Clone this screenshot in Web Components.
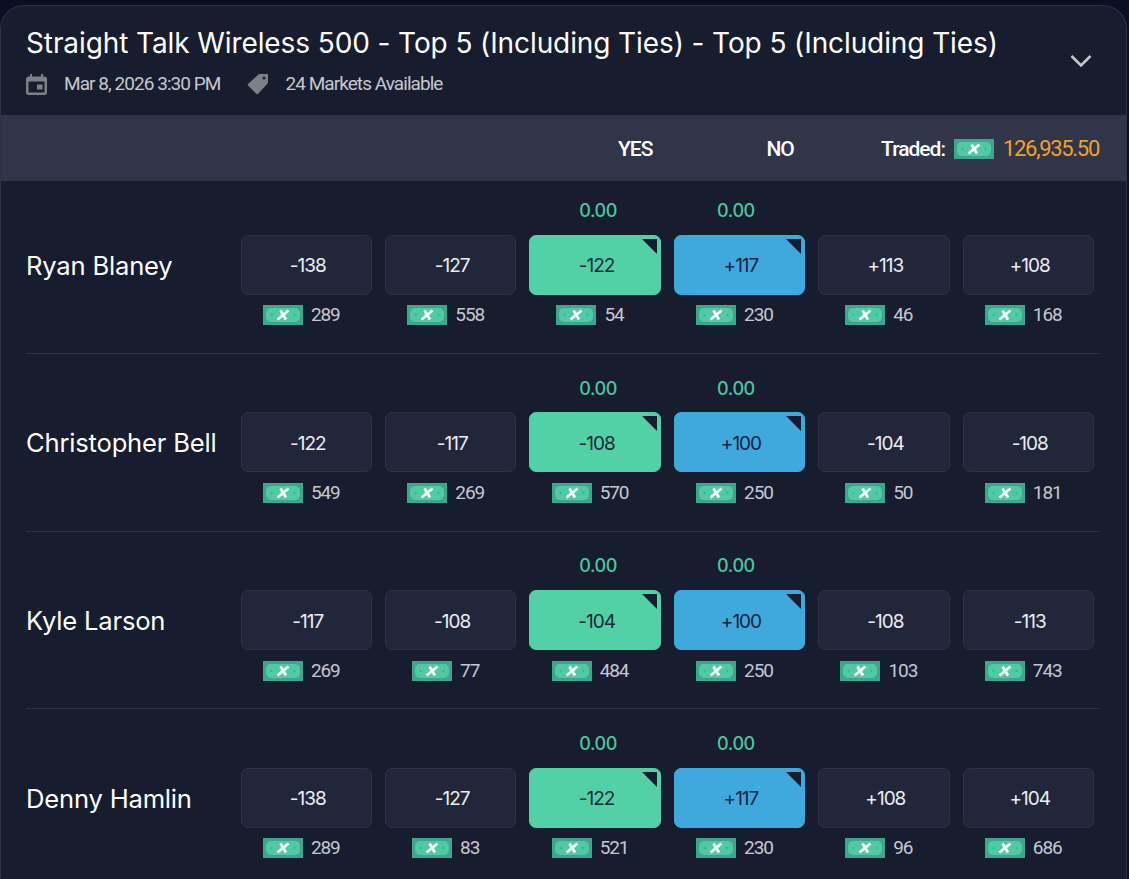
<!DOCTYPE html>
<html lang="en">
<head>
<meta charset="utf-8">
<title>Market</title>
<style>
  html, body { margin: 0; height: 879px; overflow: hidden; background: #0b0f24; }
  body { padding: 5px 2px 0 0; box-sizing: border-box; font-family: Inter, "Noto Sans", sans-serif; color: #fff; }
</style>
</head>
<body>
<market-card
  heading="Straight Talk Wireless 500 - Top 5 (Including Ties) - Top 5 (Including Ties)"
  date="Mar 8, 2026 3:30 PM"
  markets="24 Markets Available"
  traded="126,935.50">
  <runner-row name="Ryan Blaney" first data-prices="-138:289,-127:558,-122:54,+117:230,+113:46,+108:168"></runner-row>
  <runner-row name="Christopher Bell" data-prices="-122:549,-117:269,-108:570,+100:250,-104:50,-108:181"></runner-row>
  <runner-row name="Kyle Larson" data-prices="-117:269,-108:77,-104:484,+100:250,-108:103,-113:743"></runner-row>
  <runner-row name="Denny Hamlin" data-prices="-138:289,-127:83,-122:521,+117:230,+108:96,+104:686"></runner-row>
</market-card>

<script>
const billTemplate = document.createElement('template')
billTemplate.innerHTML = `
  <style>
    :host { display: inline-flex; width: 40px; height: 20px; flex: none; }
    svg { display: block; }
  </style>
  <svg width="40" height="20" viewBox="0 0 40 20" aria-hidden="true">
    <rect width="40" height="20" fill="#3da78e"/>
    <rect x="3" y="3" width="34" height="14" rx="5" fill="#4fcaa4"/>
    <circle cx="8.500" cy="10" r="1" fill="#3da78e"/>
    <circle cx="31.500" cy="10" r="1" fill="#3da78e"/>
    <path d="M14.500 14.500L25.500 5.500M17.500 5.500L23 14.500" stroke="#fff" stroke-width="2.800" fill="none"/>
  </svg>
`
customElements.define('bill-icon',
  class extends HTMLElement {
    constructor () {
      super()
      this.attachShadow({ mode: 'open' })
        .appendChild(billTemplate.content.cloneNode(true))
    }
  })

const cardTemplate = document.createElement('template')
cardTemplate.innerHTML = `
  <style>
    :host {
      display: block;
      background: #181c2f;
      border: 1px solid #2d3247;
      border-bottom: none;
      border-radius: 24px 24px 0 0;
      height: 900px;
      overflow: hidden;
    }
    #head {
      height: 109px;
      box-sizing: border-box;
      padding: 18px 26px 0 25px;
      position: relative;
    }
    h1 {
      margin: 0;
      font: 400 28px/38px "Inter", sans-serif;
      letter-spacing: -0.1px;
      color: #fff;
      white-space: nowrap;
    }
    #meta {
      display: flex;
      align-items: center;
      margin-top: 10px;
      font: 400 19px/24px "Roboto", sans-serif;
      letter-spacing: -0.95px;
      color: #c6c8cf;
    }
    #meta svg { display: block; flex: none; }
    #cal { margin-right: 17px; }
    #tag { margin: 0 17px 0 26px; }
    #chev { position: absolute; right: 33px; top: 47px; }
    #bar {
      height: 66px;
      box-sizing: border-box;
      display: flex;
      align-items: center;
      padding: 1px 27px 0 617px;
      background: #30354a;
      font: 500 21px/24px "Roboto", sans-serif;
      letter-spacing: -1px;
    }
    #no { margin-left: 114px; }
    #traded { margin-left: auto; display: flex; align-items: center; gap: 9px; }
    #amt { color: #eea326; font-weight: 400; font-size: 22px; letter-spacing: -1.300px; }
  </style>
  <div id="head">
    <h1></h1>
    <div id="meta">
      <svg id="cal" width="21" height="21" viewBox="0 0 21 21" fill="#7c8087">
        <path fill-rule="evenodd" d="M18 2.500H17V0H15V2.500H6V0H4V2.500H3C1.400 2.500 0 3.900 0 5V18.500C0 20 1 21 2.500 21H18.500C20 21 21 20 21 18.500V5C21 3.600 20 2.500 18 2.500ZM18.500 18.500H2.500V7.500H18.500ZM11 10.500H16.500V15.500H11Z"/>
      </svg>
      <span id="date"></span>
      <svg id="tag" width="22" height="22" viewBox="0 0 22 22" fill="#7c8087">
        <path d="M12 1H20C20.600 1 21 1.400 21 2V10L11 21C10.600 21.400 10 21.400 9.600 21L1 12.400C0.600 12 0.600 11.400 1 11ZM17 3.500A1.500 1.500 0 1 0 17 6.500A1.500 1.500 0 1 0 17 3.500Z" fill-rule="evenodd"/>
      </svg>
      <span id="markets"></span>
    </div>
    <svg id="chev" width="24" height="16" viewBox="0 0 24 16" fill="none" stroke="#c6c8cf" stroke-width="2.500">
      <path d="M2.500 3L12 12.500L21.500 3"/>
    </svg>
  </div>
  <div id="bar">
    <span>YES</span>
    <span id="no">NO</span>
    <div id="traded"><span>Traded:</span><bill-icon></bill-icon><span id="amt"></span></div>
  </div>
  <slot></slot>
`
customElements.define('market-card',
  class extends HTMLElement {
    constructor () {
      super()
      this.attachShadow({ mode: 'open' })
        .appendChild(cardTemplate.content.cloneNode(true))
    }

    connectedCallback () {
      const root = this.shadowRoot
      root.querySelector('h1').textContent = this.getAttribute('heading')
      root.querySelector('#date').textContent = this.getAttribute('date')
      root.querySelector('#markets').textContent = this.getAttribute('markets')
      root.querySelector('#amt').textContent = this.getAttribute('traded')
    }
  })

const priceTemplate = document.createElement('template')
priceTemplate.innerHTML = `
  <style>
    :host { display: flex; flex-direction: column; align-items: stretch; min-width: 0; }
    #stake {
      height: 24px;
      margin: -35.700px 0 11.700px;
      text-align: center;
      font: 500 18px/24px "Inter", sans-serif;
      letter-spacing: -0.4px;
      color: #4cc6a0;
    }
    :host([kind="yes"]) #stake { padding-left: 6px; }
    :host([kind="no"]) #stake { padding-right: 7px; }
    #btn {
      height: 60px;
      box-sizing: border-box;
      display: flex;
      align-items: center;
      justify-content: center;
      position: relative;
      border-radius: 7px;
      border: 1px solid #2d3247;
      background: #22263a;
      color: #eceef2;
      font: 400 19px/24px "Inter", sans-serif;
      letter-spacing: -1px;
      padding: 3px 0 0 3px;
    }
    :host([kind="yes"]) #btn { background: #52d0a6; border-color: #52d0a6; color: #1c2b3a; }
    :host([kind="no"]) #btn { background: #3fa9de; border-color: #3fa9de; color: #18233f; }
    #corner { display: none; }
    :host([kind]) #corner {
      display: block;
      position: absolute;
      top: 3px;
      right: 3px;
      width: 0;
      height: 0;
      border-top: 15px solid #181c2f;
      border-left: 15px solid transparent;
    }
    #size {
      display: flex;
      align-items: center;
      justify-content: center;
      gap: 8px;
      height: 20px;
      margin-top: 10.790px;
      padding-right: 10px;
      font: 400 19px/20px "Roboto", sans-serif;
      letter-spacing: -1.100px;
      color: #c6c8cf;
    }
  </style>
  <div id="stake"></div>
  <div id="btn"><span id="odds"></span><i id="corner"></i></div>
  <div id="size"><bill-icon></bill-icon><span id="qty"></span></div>
`
customElements.define('price-cell',
  class extends HTMLElement {
    constructor () {
      super()
      this.attachShadow({ mode: 'open' })
        .appendChild(priceTemplate.content.cloneNode(true))
    }

    connectedCallback () {
      const root = this.shadowRoot
      root.querySelector('#odds').textContent = this.getAttribute('odds')
      root.querySelector('#qty').textContent = this.getAttribute('qty')
      const stake = root.querySelector('#stake')
      stake.textContent = this.hasAttribute('kind') ? '0.00' : ''
    }
  })

const rowTemplate = document.createElement('template')
rowTemplate.innerHTML = `
  <style>
    :host { display: block; margin: 0 27px 0 25px; }
    #row {
      display: grid;
      grid-template-columns: 201.600px repeat(6, 131.4px);
      column-gap: 13px;
      align-items: start;
      padding: 58.300px 0 27.580px;
      border-top: 1px solid #2d3247;
    }
    :host([first]) #row { padding-top: 53.700px; border-top: none; }
    #name {
      grid-column: 1;
      font: 400 25.600px/61px "Inter", sans-serif;
      letter-spacing: -0.2px;
      color: #fff;
      white-space: nowrap;
    }
    #cells { display: contents; }
  </style>
  <div id="row">
    <div id="name"></div>
    <div id="cells"></div>
  </div>
`
customElements.define('runner-row',
  class extends HTMLElement {
    constructor () {
      super()
      this.attachShadow({ mode: 'open' })
        .appendChild(rowTemplate.content.cloneNode(true))
    }

    connectedCallback () {
      this.shadowRoot.querySelector('#name').textContent = this.getAttribute('name')
      const cells = this.shadowRoot.querySelector('#cells')
      this.dataset.prices.split(',').forEach((price, index) => {
        const [odds, qty] = price.split(':')
        const cell = document.createElement('price-cell')
        cell.setAttribute('odds', odds)
        cell.setAttribute('qty', qty)
        if (index === 2) cell.setAttribute('kind', 'yes')
        if (index === 3) cell.setAttribute('kind', 'no')
        cells.appendChild(cell)
      })
    }
  })
</script>
</body>
</html>
